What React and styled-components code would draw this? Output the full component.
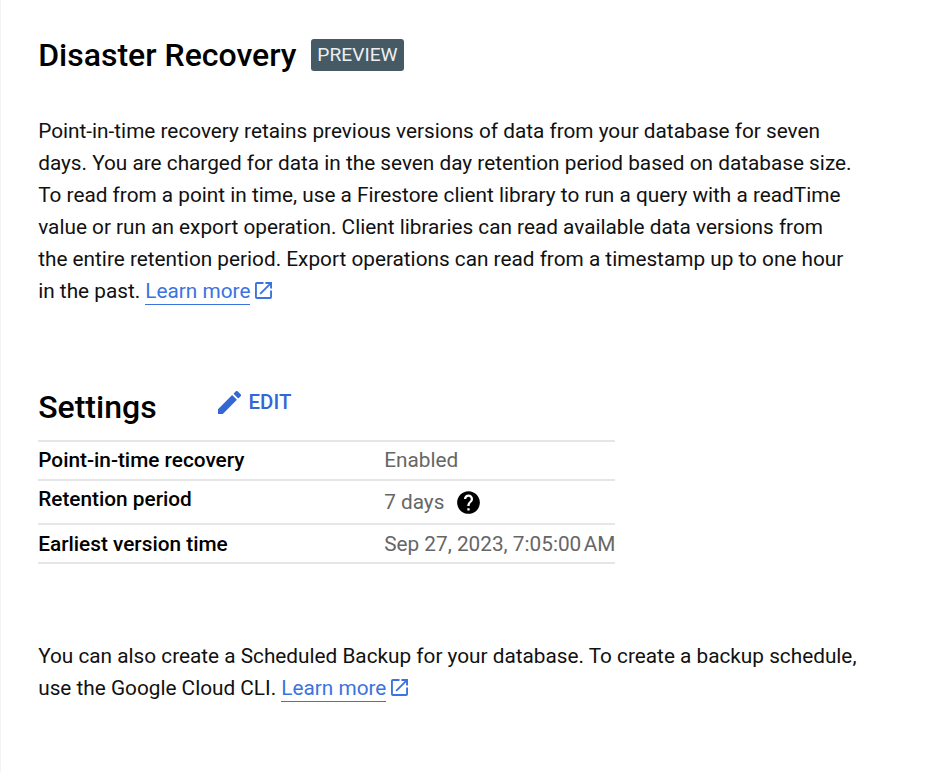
import React from "react";
import styled, { createGlobalStyle } from "styled-components";

const GlobalStyle = createGlobalStyle`
  * { box-sizing: border-box; }
  body { margin: 0; background: #fff; font-family: Roboto, sans-serif; color: #000; }
`;
const Page = styled.main`
  min-height: 772px;
  padding: 35px 0 0 37.2px;
  border-left: 1px solid #f3f3f3;
`;
const Header = styled.header`
  display: flex;
  align-items: center;
  gap: 14.5px;
  height: 40px;
`;
const Title = styled.h1`
  margin: 0;
  font-size: 32px;
  line-height: 40px;
  font-weight: 500;
  white-space: nowrap;
`;
const Badge = styled.span`
  display: flex;
  align-items: center;
  justify-content: center;
  width: 93px;
  height: 32px;
  padding-bottom: 2px;
  border-radius: 3px;
  background: #455a64;
  color: #eceff1;
  font-size: 19.2px;
`;
const Paragraph = styled.p`
  margin: ${(p) => p.$top}px 0 0;
  font-size: 20.78px;
  line-height: 32px;
  color: #111;
  white-space: nowrap;
`;
const Line = styled.span`
  display: block;
`;
const Link = styled.a`
  color: #3b73e0;
  text-decoration: none;
  display: inline-flex;
  align-items: flex-start;
  gap: 5px;
  line-height: 24px;

  svg {
    margin-top: 3px;
  }
`;
const LinkText = styled.span`
  border-bottom: 1px solid #3b73e0;
  height: 26px;
`;
const SettingsHeader = styled.div`
  display: flex;
  height: 53px;
  margin-top: 80px;
`;
const EditButton = styled.button`
  display: flex;
  align-items: center;
  gap: 8px;
  height: 30px;
  margin: 0 0 0 61px;
  padding: 0;
  border: 0;
  background: none;
  color: #3367d6;
  font: 500 20.4px Roboto, sans-serif;
`;
const Table = styled.dl`
  width: 577px;
  margin: 0;
  border-top: 2px solid #e6e6e6;
`;
const Row = styled.div`
  display: grid;
  grid-template-columns: 346px 1fr;
  height: ${(p) => p.$height}px;
  border-bottom: 2px solid #e6e6e6;
  line-height: ${(p) => p.$line || 37}px;
  white-space: nowrap;
`;
const Label = styled.dt`
  font-weight: 500;
  font-size: 20.8px;
`;
const Value = styled.dd`
  display: flex;
  align-items: center;
  gap: 12px;
  margin: 0;
  font-size: 20.78px;
  color: #666;
`;

const ExternalIcon = () => (
  <svg width="17" height="17" viewBox="3 3 18 18" fill="currentColor">
    <path d="M19 19H5V5h7V3H5a2 2 0 0 0-2 2v14a2 2 0 0 0 2 2h14a2 2 0 0 0 2-2v-7h-2v7zM14 3v2h3.59l-9.83 9.83 1.41 1.41L19 6.41V10h2V3h-7z" />
  </svg>
);
const PencilIcon = () => (
  <svg width="23" height="23" viewBox="3 3 18 18" fill="currentColor">
    <path d="M3 17.25V21h3.75L17.81 9.94l-3.75-3.75L3 17.25zM20.71 7.04a1 1 0 0 0 0-1.41l-2.34-2.34a1 1 0 0 0-1.41 0l-1.83 1.83 3.75 3.75 1.83-1.83z" />
  </svg>
);
const HelpIcon = () => (
  <svg width="25" height="25" viewBox="1 1 22 22" fill="#000">
    <path d="M12 2C6.48 2 2 6.48 2 12s4.48 10 10 10 10-4.48 10-10S17.52 2 12 2zm1 17h-2v-2h2v2zm2.07-7.75-.9.92C13.45 12.9 13 13.5 13 15h-2v-.5c0-1.1.45-2.1 1.17-2.83l1.24-1.26c.37-.36.59-.86.59-1.41 0-1.1-.9-2-2-2s-2 .9-2 2H8c0-2.21 1.79-4 4-4s4 1.79 4 4c0 .88-.36 1.68-.93 2.25z" />
  </svg>
);
const LearnMore = () => (
  <Link><LinkText>Learn more</LinkText><ExternalIcon /></Link>
);

export default function App() {
  return (
    <Page>
      <GlobalStyle />
      <Header>
        <Title>Disaster Recovery</Title>
        <Badge>PREVIEW</Badge>
      </Header>
      <Paragraph $top={40}>
        <Line>Point-in-time recovery retains previous versions of data from your database for seven</Line>
        <Line>days. You are charged for data in the seven day retention period based on database size.</Line>
        <Line>To read from a point in time, use a Firestore client library to run a query with a readTime</Line>
        <Line>value or run an export operation. Client libraries can read available data versions from</Line>
        <Line>the entire retention period. Export operations can read from a timestamp up to one hour</Line>
        <Line>in the past. <LearnMore /></Line>
      </Paragraph>
      <SettingsHeader>
        <Title as="h2">Settings</Title>
        <EditButton><PencilIcon />EDIT</EditButton>
      </SettingsHeader>
      <Table>
        <Row $height={39}><Label>Point-in-time recovery</Label><Value>Enabled</Value></Row>
        <Row $height={44}><Label>Retention period</Label><Value>7 days <HelpIcon /></Value></Row>
        <Row $height={39} $line={39}><Label>Earliest version time</Label><Value>{"Sep 27, 2023, 7:05:00\u202fAM"}</Value></Row>
      </Table>
      <Paragraph $top={76}>
        <Line>You can also create a Scheduled Backup for your database. To create a backup schedule,</Line>
        <Line>use the Google Cloud CLI. <LearnMore /></Line>
      </Paragraph>
    </Page>
  );
}
